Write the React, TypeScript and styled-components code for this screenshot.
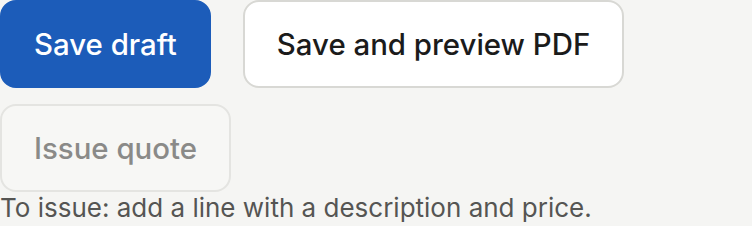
import styled, { createGlobalStyle } from "styled-components";

const GlobalStyle = createGlobalStyle`
  html, body {
    margin: 0;
    padding: 0;
    background: #f5f5f3;
  }
  body {
    font-family: Inter, "Noto Sans", "Liberation Sans", sans-serif;
  }
`;

const Actions = styled.div`
  display: flex;
  flex-wrap: wrap;
  gap: 16px 32px;
  width: 752px;
`;

const Button = styled.button<{ $variant: "primary" | "secondary" | "disabled" }>`
  box-sizing: border-box;
  height: 88px;
  padding: 0 32px;
  border-radius: 16px;
  font-family: inherit;
  font-size: 29.4px;
  font-weight: 500;
  cursor: ${(p) => (p.$variant === "disabled" ? "not-allowed" : "pointer")};
  border: 2px solid
    ${(p) =>
      p.$variant === "primary"
        ? "#1c5cb9"
        : p.$variant === "secondary"
          ? "#d8d8d4"
          : "#e4e4e1"};
  background: ${(p) =>
    p.$variant === "primary"
      ? "#1c5cb9"
      : p.$variant === "secondary"
        ? "#ffffff"
        : "#f7f7f5"};
  color: ${(p) =>
    p.$variant === "primary"
      ? "#ffffff"
      : p.$variant === "secondary"
        ? "#1b1b1b"
        : "#8a8a88"};
`;

const Hint = styled.p`
  margin: 0;
  font-size: 26px;
  line-height: 32px;
  color: #555553;
`;

export default function App() {
  return (
    <>
      <GlobalStyle />
      <Actions>
        <Button $variant="primary">Save draft</Button>
        <Button $variant="secondary">Save and preview PDF</Button>
        <Button $variant="disabled" disabled>
          Issue quote
        </Button>
      </Actions>
      <Hint>To issue: add a line with a description and price.</Hint>
    </>
  );
}
